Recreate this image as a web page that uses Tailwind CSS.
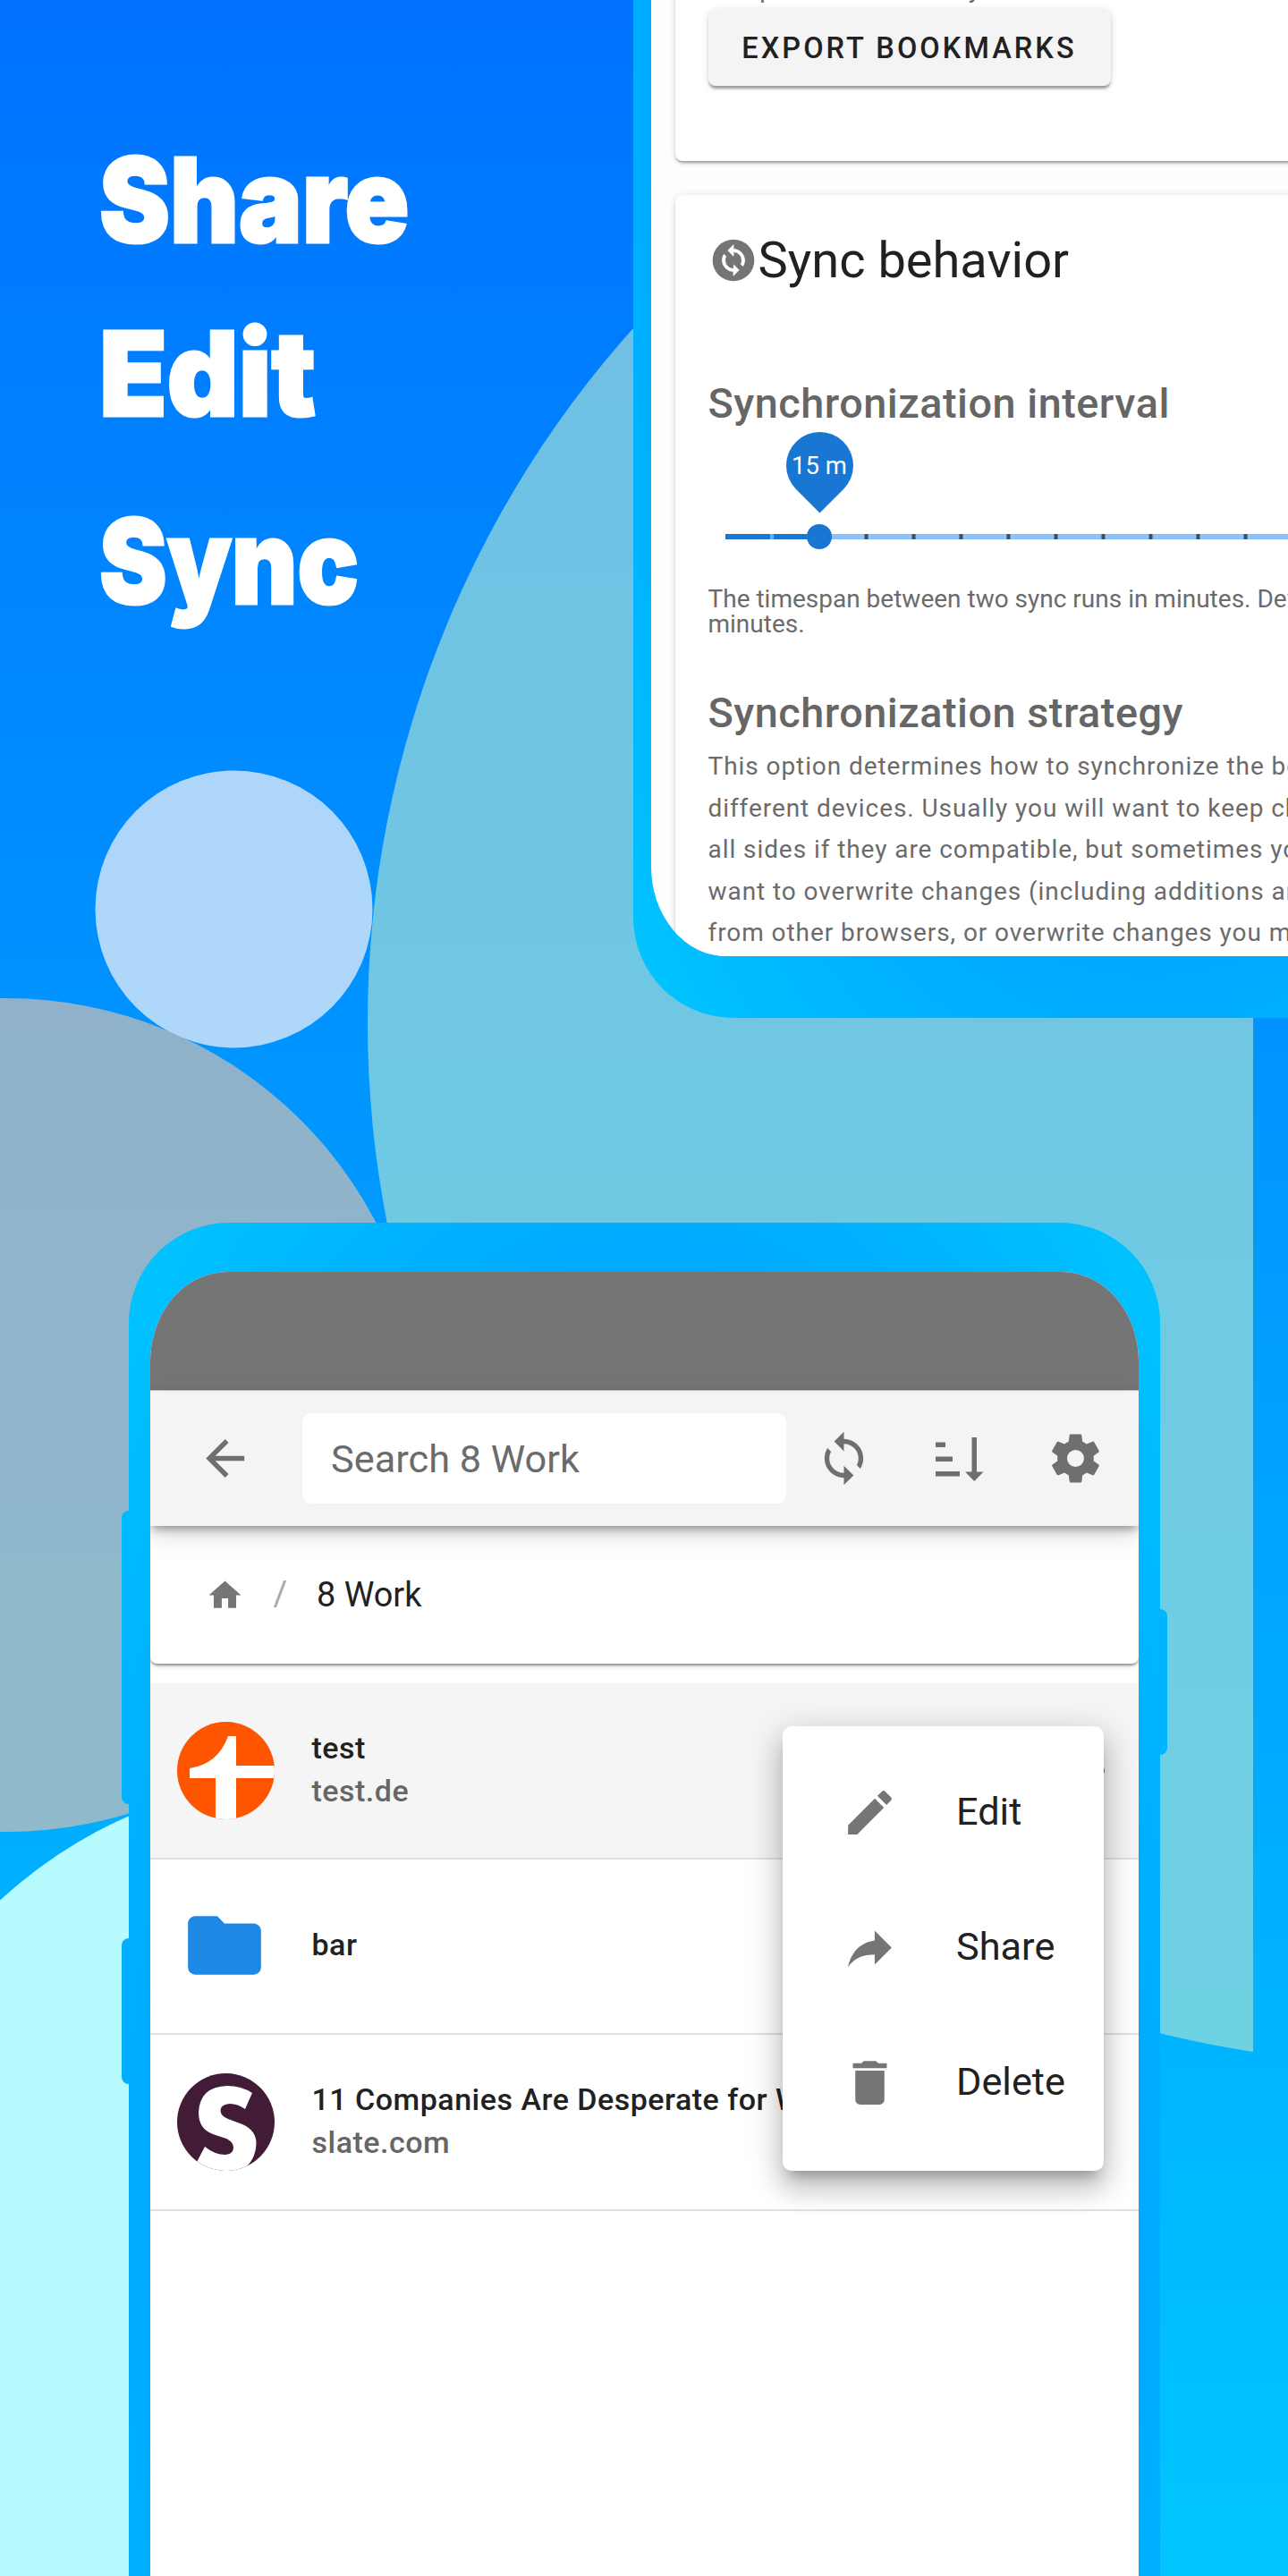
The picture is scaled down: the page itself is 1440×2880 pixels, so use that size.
<!DOCTYPE html>
<html lang="en">
<head>
<meta charset="utf-8">
<title>Share, Edit, Sync</title>
<script src="https://cdn.jsdelivr.net/npm/@tailwindcss/browser@4"></script>
</head>
<body class="font-['Roboto',sans-serif] text-[#212121]">
<main class="relative h-[2880px] w-[1440px] overflow-hidden bg-[linear-gradient(180deg,#0072ff,#00c6ff)]">

  <!-- Backdrop circles -->
  <svg class="absolute inset-0" width="1440" height="2880" viewBox="0 0 1440 2880">
    <defs><clipPath id="edge"><rect width="1401" height="2880"/></clipPath></defs>
    <circle cx="1574.5" cy="1143.4" r="1163.5" fill="#a3e0d6" fill-opacity=".68" clip-path="url(#edge)"/>
    <circle cx="261.5" cy="1016.4" r="155" fill="#dfeaf9" fill-opacity=".78"/>
    <circle cx="7" cy="1582" r="466" fill="#dcc1af" fill-opacity=".65"/>
    <circle cx="355" cy="2510" r="524" fill="#b8fbff"/>
  </svg>

  <h1 class="absolute left-[110.500px] top-[142px] flex flex-col items-start font-['Inter',sans-serif] text-[131px] font-black leading-[164px] text-white [-webkit-text-stroke:3px_white]">
    <span class="h-[194px] origin-left scale-x-[.905]">Share</span>
    <span class="h-[210px] origin-left scale-x-[.945]">Edit</span>
    <span class="origin-left scale-x-[.867]">Sync</span>
  </h1>

  <!-- Settings phone -->
  <section class="absolute left-[708px] top-[-1112px] h-[2249.5px] w-[1152px] rounded-[112px] bg-[radial-gradient(#0072ff,#00c6ff)]">
    <div class="absolute left-[20px] right-[20px] top-[54px] bottom-[68.5px] flex flex-col overflow-hidden bg-[#fefefe] rounded-[84px/100px]">
      <div class="mx-[26.5px] flex h-[1238px] shrink-0 flex-col justify-end rounded-lg bg-white px-[37px] pb-[84px] shadow-[0_3px_3px_-1px_rgba(0,0,0,.35),0_1px_8px_rgba(0,0,0,.14)]">
        <p class="whitespace-nowrap text-[28px] leading-[46px] tracking-[.93px] text-[#6b6b6b]">The profile is stored by the browser in HTML format</p>
        <div class="flex h-[85px] w-[450px] items-center justify-center rounded-lg bg-[#f4f4f4] pt-[2px] text-[32.500px] font-medium tracking-[3.07px] shadow-[0_4px_3px_-1px_rgba(0,0,0,.35),0_1px_8px_rgba(0,0,0,.14)]">EXPORT BOOKMARKS</div>
      </div>
      <div class="mx-[26.5px] mt-[38px] flex h-[1000px] shrink-0 flex-col rounded-lg bg-white px-[37px] pt-[33px] shadow-[0_3px_3px_-1px_rgba(0,0,0,.35),0_1px_8px_rgba(0,0,0,.14)]">
        <div class="flex h-[80px] items-center text-[56px] leading-[80px]">
          <svg class="h-[56px] w-[56px]" viewBox="0 0 24 24"><circle cx="12" cy="12" r="10" fill="#757575"/><path transform="translate(12 12) scale(.67) translate(-12 -12)" fill="#fff" stroke="#fff" stroke-width=".5" d="M12,18A6,6 0 0,1 6,12C6,11 6.25,10.03 6.7,9.2L5.24,7.74C4.46,8.97 4,10.43 4,12A8,8 0 0,0 12,20V23L16,19L12,15M12,4V1L8,5L12,9V6A6,6 0 0,1 18,12C18,13 17.75,13.97 17.3,14.8L18.76,16.26C19.54,15.03 20,13.57 20,12A8,8 0 0,0 12,4Z"/></svg>
          <span>Sync behavior</span>
        </div>
        <h2 class="mt-[90px] h-[60px] whitespace-nowrap text-[46.800px] font-medium leading-[60px] tracking-[.5px] text-[#666]">Synchronization interval</h2>
        <div class="relative mt-[1px] h-[144px]">
          <div class="absolute left-[19.5px] top-[115px] flex h-[6px] w-[700px] bg-[#8cc1fb]">
            <div class="w-[105px] bg-[#1976d2]"></div>
          </div>
          <svg class="absolute left-[19.5px] top-[115px]" width="660" height="6"><path d="M50 0h4v6h-4z" fill="#6aacf0"/><path d="M155.500 0h4v6h-4zM208.500 0h4v6h-4zM261.500 0h4v6h-4zM314.500 0h4v6h-4zM367.500 0h4v6h-4zM420.500 0h4v6h-4zM473.500 0h4v6h-4zM526.500 0h4v6h-4zM579.500 0h4v6h-4z" fill="#37516b"/></svg>
          <div class="absolute left-[110.500px] top-[104px] h-[28px] w-[28px] rounded-full bg-[#1976d2]"></div>
          <div class="absolute left-[87px] top-[1px] h-[75px] w-[75px] rotate-45 rounded-[50%_50%_0_50%] bg-[#1976d2]"></div>
          <div class="absolute left-[87px] top-[1px] w-[75px] whitespace-nowrap text-center text-[27.500px] leading-[75px] text-white">15 m</div>
        </div>
        <p class="mt-[30px] h-[56px] whitespace-nowrap text-[28px] leading-[28px] text-[#6b6b6b]">The timespan between two sync runs in minutes. Default is every 15<br>minutes.</p>
        <h2 class="mt-[55px] h-[60px] whitespace-nowrap text-[46.800px] font-medium leading-[60px] tracking-[.5px] text-[#666]">Synchronization strategy</h2>
        <p class="mt-[7px] whitespace-nowrap text-[28px] leading-[46.5px] tracking-[.93px] text-[#6b6b6b]">This option determines how to synchronize the bookmarks on<br>different devices. Usually you will want to keep changes from<br>all sides if they are compatible, but sometimes you may<br>want to overwrite changes (including additions and removals)<br>from other browsers, or overwrite changes you made</p>
      </div>
    </div>
  </section>

  <!-- Bookmarks phone -->
  <section class="absolute left-[144px] top-[1367px] h-[2249.5px] w-[1152.500px] rounded-[112px] bg-[radial-gradient(#0072ff,#00c6ff)]">
    <i class="absolute left-[-8px] top-[321.500px] h-[328px] w-[8px] rounded-l-[8px] bg-[linear-gradient(#00b9ff,#00b2ff)]"></i>
    <i class="absolute left-[-8px] top-[800px] h-[163px] w-[8px] rounded-l-[8px] bg-[#00aeff]"></i>
    <i class="absolute right-[-8.500px] top-[432px] h-[163px] w-[8.500px] rounded-r-[8px] bg-[#00b5ff]"></i>
    <div class="absolute bottom-[54px] left-[23.500px] right-[24px] top-[55px] flex flex-col overflow-hidden bg-white rounded-[86px/100px]">
      <div class="h-[132px] shrink-0 bg-[#757575]"></div>
      <header class="relative z-10 flex h-[152px] shrink-0 items-center border-t border-[#bbb] bg-[#f4f4f4] pl-[51px] shadow-[0_5px_10px_-2px_rgba(0,0,0,.38),0_10px_26px_rgba(0,0,0,.15)]">
        <svg class="h-[65px] w-[65px]" viewBox="0 0 24 24" fill="#6f6f6f"><path d="M20,11V13H8L13.5,18.5L12.08,19.92L4.16,12L12.08,4.08L13.5,5.5L8,11H20Z"/></svg>
        <div class="ml-[54px] h-[101px] w-[541px] rounded-[10px] bg-white pl-[32.500px] text-[43.300px] leading-[103px] text-[#6b6b6b]">Search 8 Work</div>
        <svg class="ml-[32px] h-[65px] w-[65px]" viewBox="0 0 24 24" fill="#6f6f6f"><path d="M12,18A6,6 0 0,1 6,12C6,11 6.25,10.03 6.7,9.2L5.24,7.74C4.46,8.97 4,10.43 4,12A8,8 0 0,0 12,20V23L16,19L12,15M12,4V1L8,5L12,9V6A6,6 0 0,1 18,12C18,13 17.75,13.97 17.3,14.8L18.76,16.26C19.54,15.03 20,13.57 20,12A8,8 0 0,0 12,4Z"/></svg>
        <svg class="ml-[70px] h-[50px] w-[54px]" viewBox="0 0 54 50" fill="#6f6f6f"><path d="M0 6.500h11v5.500H0zM0 22.500h19v5.500H0zM0 39h27v5.500H0zM40.500 1h5.500v38.500h7.500L43.300 50 33 39.500h7.500z"/></svg>
        <svg class="ml-[70.500px] h-[65px] w-[65px]" viewBox="0 0 24 24" fill="#6f6f6f"><path d="M12,15.5A3.5,3.5 0 0,1 8.5,12A3.5,3.5 0 0,1 12,8.5A3.5,3.5 0 0,1 15.5,12A3.5,3.5 0 0,1 12,15.5M19.43,12.97C19.47,12.65 19.5,12.33 19.5,12C19.5,11.67 19.47,11.34 19.43,11L21.54,9.37C21.73,9.22 21.78,8.95 21.66,8.73L19.66,5.27C19.54,5.05 19.27,4.96 19.05,5.05L16.56,6.05C16.04,5.66 15.5,5.32 14.87,5.07L14.5,2.42C14.46,2.18 14.25,2 14,2H10C9.75,2 9.54,2.18 9.5,2.42L9.13,5.07C8.5,5.32 7.96,5.66 7.44,6.05L4.95,5.05C4.73,4.96 4.46,5.05 4.34,5.27L2.34,8.73C2.21,8.95 2.27,9.22 2.46,9.37L4.57,11C4.53,11.34 4.5,11.67 4.5,12C4.5,12.33 4.53,12.65 4.57,12.97L2.46,14.63C2.27,14.78 2.21,15.05 2.34,15.27L4.34,18.73C4.46,18.95 4.73,19.03 4.95,18.95L7.44,17.94C7.96,18.34 8.5,18.68 9.13,18.93L9.5,21.58C9.54,21.82 9.75,22 10,22H14C14.25,22 14.46,21.82 14.5,21.58L14.87,18.93C15.5,18.67 16.04,18.34 16.56,17.94L19.05,18.95C19.27,19.03 19.54,18.95 19.66,18.73L21.66,15.27C21.78,15.05 21.73,14.78 21.54,14.63L19.43,12.97Z"/></svg>
      </header>
      <nav class="flex h-[154px] shrink-0 items-center rounded-b-lg bg-white pl-[62.500px] text-[37.900px] leading-[60px] shadow-[0_3px_3px_-1px_rgba(0,0,0,.4),0_1px_10px_rgba(0,0,0,.14)]">
        <svg class="h-[43px] w-[43px]" viewBox="0 0 24 24" fill="#757575"><path d="M10,20V14H14V20H19V12H22L12,3L2,12H5V20H10Z"/></svg>
        <span class="w-[81px] pb-[2px] pl-[32.500px] text-[#a8a8a8]">/</span>
        <span class="pb-[1px]">8 Work</span>
      </nav>
      <div class="mt-[22px] flex h-[196.500px] shrink-0 items-center border-b-2 border-[#e0e0e0] bg-[#f5f5f5] pl-[30px] text-[34px] font-medium tracking-[.5px]">
        <svg class="h-[109px] w-[109px] rounded-full" viewBox="0 0 109 109"><path fill="#ff5500" d="M0 0h109v109H0z"/><path fill="#fff" d="M57 16h9v33h43v14H66v46H43V63H14V52q32-5 43-36z"/></svg>
        <div class="flex flex-col pb-[2px] pl-[42px] leading-[48.500px]"><span>test</span><span class="text-[#666]">test.de</span></div>
        <svg class="ml-auto mr-[26.500px] h-[65px] w-[65px]" viewBox="0 0 24 24" fill="#757575"><path d="M16,12A2,2 0 0,1 18,10A2,2 0 0,1 20,12A2,2 0 0,1 18,14A2,2 0 0,1 16,12M10,12A2,2 0 0,1 12,10A2,2 0 0,1 14,12A2,2 0 0,1 12,14A2,2 0 0,1 10,12M4,12A2,2 0 0,1 6,10A2,2 0 0,1 8,12A2,2 0 0,1 6,14A2,2 0 0,1 4,12Z"/></svg>
      </div>
      <div class="flex h-[196.500px] shrink-0 items-center border-b-2 border-[#e0e0e0] pb-[2px] pl-[34.500px] text-[34px] font-medium tracking-[.5px]">
        <svg class="h-[98px] w-[98px]" viewBox="0 0 24 24" fill="#1e88e5"><path d="M10,4H4C2.89,4 2,4.89 2,6V18A2,2 0 0,0 4,20H20A2,2 0 0,0 22,18V8C22,6.89 21.1,6 20,6H12L10,4Z"/></svg>
        <span class="pl-[48.500px]">bar</span>
      </div>
      <div class="flex h-[196.500px] shrink-0 items-center border-b-2 border-[#e0e0e0] pl-[30px] text-[34px] font-medium tracking-[.5px]">
        <svg class="h-[109px] w-[109px] rounded-full" viewBox="0 0 109 109"><path fill="#421b36" d="M0 0h109v109H0z"/><path fill="#fff" d="M84 22L76 40Q68 34 59 34Q48.500 35 48.500 42Q49 48 57 51L73 57Q88.500 64 88.500 78Q88 98 72 109H20V103L31 82Q42 91 54 91Q63 90 63 83Q63 77 55 73L40 68Q24 62 24 44Q25 15 56 14Q72 14 84 22Z"/></svg>
        <div class="flex flex-col whitespace-nowrap pb-[2px] pl-[42px] leading-[48.500px]"><span>11 Companies Are Desperate for Workers</span><span class="text-[#666]">slate.com</span></div>
      </div>
    </div>

    <!-- Context menu -->
    <div class="absolute left-[731px] top-[563px] flex h-[497px] w-[358.500px] flex-col rounded-[10px] bg-white pt-[21px] text-[43.300px] leading-[60px] shadow-[0_13px_14px_-8px_rgba(0,0,0,.25),0_21px_28px_2px_rgba(0,0,0,.14),0_8px_38px_6px_rgba(0,0,0,.14)]">
      <div class="flex h-[151px] items-center pl-[65px]"><svg class="h-[65px] w-[65px]" viewBox="0 0 24 24" fill="#757575"><path d="M20.71,7.04C21.1,6.65 21.1,6 20.71,5.63L18.37,3.29C18,2.9 17.35,2.9 16.96,3.29L15.12,5.12L18.87,8.87M3,17.25V21H6.75L17.81,9.93L14.06,6.18L3,17.25Z"/></svg><span class="pb-[1px] pl-[64px]">Edit</span></div>
      <div class="flex h-[151px] items-center pl-[65px]"><svg class="h-[65px] w-[65px]" viewBox="0 0 24 24" fill="#757575"><path d="M21,12L14,5V9C7,10 4,15 3,20C5.5,16.5 9,14.9 14,14.9V19L21,12Z"/></svg><span class="pb-[1px] pl-[64px]">Share</span></div>
      <div class="flex h-[151px] items-center pl-[65px]"><svg class="h-[65px] w-[65px]" viewBox="0 0 24 24" fill="#757575"><path d="M19,4H15.5L14.5,3H9.5L8.5,4H5V6H19M6,19A2,2 0 0,0 8,21H16A2,2 0 0,0 18,19V7H6V19Z"/></svg><span class="pb-[1px] pl-[64px]">Delete</span></div>
    </div>
  </section>
</main>
</body>
</html>
